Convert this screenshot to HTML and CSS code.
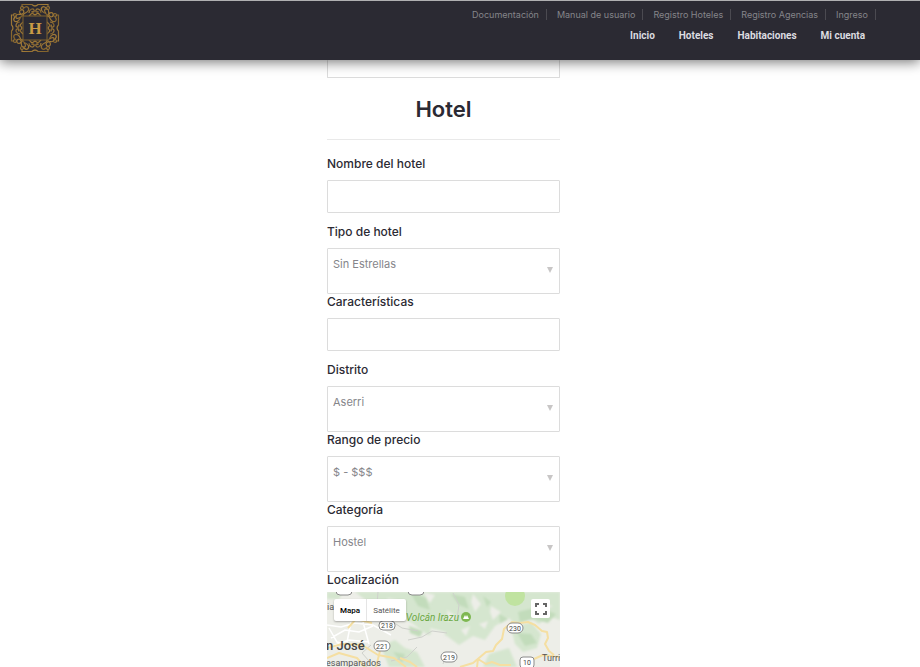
FILE: index.html
```html
<!DOCTYPE html>
<html lang="es">
<head>
<meta charset="utf-8">
<title>Registro Hoteles</title>
<link rel="stylesheet" href="styles.css">
</head>
<body>
<header class="header">
  <a class="logo" href="#" aria-label="Inicio">
    <svg viewBox="0 0 50 50" width="50" height="50">
      <defs>
        <linearGradient id="gold" x1="0" x2="1" y1="0" y2="1">
          <stop offset="0" stop-color="#80612c"/><stop offset=".5" stop-color="#a37c38"/><stop offset="1" stop-color="#735729"/>
        </linearGradient>
        <g id="side" fill="none" stroke="url(#gold)" stroke-width="1.200">
          <path d="M12 4V1.500h10q3 3 6 0h10V4"/>
          <circle cx="12" cy="5" r="1.500"/><circle cx="38" cy="5" r="1.500"/>
          <path d="M14 5c3-3 6 0 4 3s-6 2-5 5M36 5c-3-3-6 0-4 3s6 2 5 5"/>
          <path d="M19 10c0-4 4-5 5-3s-2 3-2 1M31 10c0-4-4-5-5-3s2 3 2 1"/>
          <path d="M14 13c-4-1-6-5-3-6s4 3 1 4-5-1-6 2 3 3 4 1"/>
          <path d="M19 13l3-3 3 2 3-2 3 3"/>
        </g>
      </defs>
      <use href="#side"/>
      <use href="#side" transform="rotate(90 25 25)"/>
      <use href="#side" transform="rotate(180 25 25)"/>
      <use href="#side" transform="rotate(270 25 25)"/>
      <rect x="13" y="13" width="24" height="24" fill="#2b2a33" stroke="#80632f"/>
      <text class="logo-letter" x="25" y="31" text-anchor="middle">H</text>
    </svg>
  </a>
  <div class="menus">
    <nav class="top-nav" aria-label="Accesos">
      <a href="#">Documentación</a>
      <a href="#">Manual de usuario</a>
      <a href="#">Registro Hoteles</a>
      <a href="#">Registro Agencias</a>
      <a href="#">Ingreso</a>
    </nav>
    <nav class="main-nav" aria-label="Principal">
      <a href="#">Inicio</a>
      <a href="#">Hoteles</a>
      <a href="#">Habitaciones</a>
      <a href="#">Mi cuenta</a>
    </nav>
  </div>
</header>
<main class="page">
  <form class="form">
    <input class="control control-previous" type="text" aria-label="Contacto">
    <h2 class="title">Hotel</h2>
    <div class="field field-text">
      <label for="nombre">Nombre del hotel</label>
      <input class="control" id="nombre" type="text">
    </div>
    <div class="field">
      <label for="tipo">Tipo de hotel</label>
      <div class="picker"><select class="control" id="tipo"><option>Sin Estrellas</option></select></div>
    </div>
    <div class="field field-text">
      <label for="caracteristicas">Características</label>
      <input class="control" id="caracteristicas" type="text">
    </div>
    <div class="field">
      <label for="distrito">Distrito</label>
      <div class="picker"><select class="control" id="distrito"><option>Aserri</option></select></div>
    </div>
    <div class="field">
      <label for="precio">Rango de precio</label>
      <div class="picker"><select class="control" id="precio"><option>$ - $$$</option></select></div>
    </div>
    <div class="field">
      <label for="categoria">Categoría</label>
      <div class="picker"><select class="control" id="categoria"><option>Hostel</option></select></div>
    </div>
    <div class="field-map">
      <span class="map-label">Localización</span>
      <div class="map">
        <svg class="map-tiles" viewBox="0 0 233 75" preserveAspectRatio="xMinYMin slice" role="img" aria-label="Mapa de San José">
          <defs><filter id="soft"><feGaussianBlur stdDeviation="1"/></filter></defs>
          <rect width="233" height="75" fill="#edeee8"/>
          <g fill="#d5e6cf" filter="url(#soft)">
            <path d="M28 0h205v28l-12-4-9 8-10-7-12 10-8-9-14 8-10 14-12-4-14 9-12-9-9-4-10 3-16-12-17-8-20-8z"/>
            <path d="M184 36l20-6 10 12-4 14-14 4-8-8zM54 54l14-6 10 8 12 4 8 15H62l-4-10zM162 62l20-6 8 19h-34zM0 0h16l-4 7H0z"/>
          </g>
          <g fill="#c2dcbb" filter="url(#soft)">
            <path d="M83 0l16 6 4 12-12-4zM124 2l14 3 4 12-10-4zM191 20l20-5 18 7-8 9-14-4-14 3zM190 41l14 1 6 9-12 3zM82 34l14 5-3 6-10-4zM66 60l12 2-3 9zM156 4l8 6-4 5zM172 22l9 5-8 4z"/>
          </g>
          <g fill="#edeee8" filter="url(#soft)">
            <path d="M96 0l12 3-5 8zM146 2l8 10-6 8-4-10zM164 14l10 6-8 8-3-8zM120 18l10 7-9 5zM152 32l9-3-3 8zM214 12l12 2-9 4zM103 36l16 4-5 9-9-4zM134 38l9-4-4 10zM60 6l10 2-6 5z"/>
          </g>
          <circle cx="188" cy="4" r="10" fill="#c0e3a0"/>
          <g fill="none" stroke="#fff" stroke-width="1.500">
            <path d="M0 33l14 2 14-4 18 2 18 10M4 46l14-8 14 2 14-6M2 36l8 14 22 6M24 30l-4 20M36 30l6 22M0 56l22-8 20 2"/>
          </g>
          <g fill="none" stroke="#cfd1cc">
            <path d="M51 0l-1 12M63 28l12 8 16 3M126 1l6 12-2 14M81 48l14-3 10-6 15 2M44 53l-9 8 7 8-3 6M64 69l16-4 10-10M116 72l4-12"/>
          </g>
          <g fill="none" stroke="#f5dfa2" stroke-width="2" stroke-linejoin="round">
            <path d="M0 56l15-4 20 1 16 10 16 3 12 9M0 66l12-5 18 5 8 9M73 66l10 4 7 5M133 75l13-4 6-5 7-6 7-1 3-6 6-6 2-10 8-7 8 1 8-1 7 3 7 6 5 1 1 6-3 6 4 7 5 4M150 75l1-8 8 5 6-2 8 3 11 0M207 67l9-4 17 2M21 36l8-9 16 4M53 59l-4 16"/>
          </g>
          <g class="shields">
            <rect x="9" y="-6" width="16" height="9" rx="4"/><rect x="81" y="-6" width="16" height="9" rx="4"/>
            <rect x="52" y="29" width="16" height="9" rx="4"/><rect x="47" y="49" width="16" height="10" rx="5"/>
            <rect x="114" y="60" width="16" height="10" rx="5"/><rect x="180" y="31" width="16" height="10" rx="5"/>
            <rect x="193" y="65" width="14" height="11" rx="3"/>
          </g>
          <g class="shield-text" text-anchor="middle">
            <text x="60" y="36">218</text><text x="55" y="57">221</text><text x="122" y="68">219</text><text x="188" y="39">230</text><text x="200" y="73">10</text>
          </g>
          <text class="map-park" x="132" y="29" text-anchor="end">Volcán Irazu</text>
          <circle cx="139" cy="25" r="5" fill="#7fb852"/><path d="M136 27l2-4 1 2 1-2 2 4z" fill="#fff"/>
          <text class="map-city" x="-1" y="58">n José</text>
          <text class="map-town" x="-1" y="74">esamparados</text>
          <text class="map-town" x="215" y="69">Turri</text>
          <text class="map-town" x="0" y="18">ia</text>
        </svg>
        <div class="map-types">
          <button type="button" class="active">Mapa</button>
          <button type="button">Satélite</button>
        </div>
        <button type="button" class="map-full" aria-label="Pantalla completa">
          <svg viewBox="0 0 12 12" width="12" height="12"><path d="M1 4V1h3M8 1h3v3M11 8v3H8M4 11H1V8" fill="none" stroke="#666" stroke-width="2"/></svg>
        </button>
      </div>
    </div>
  </form>
</main>
</body>
</html>
```
FILE: styles.css
```css
* { box-sizing: border-box; }
body {
  margin: 0;
  overflow-x: hidden;
  background: #fff;
  color: #2b2a33;
  font-family: Inter, "Liberation Sans", sans-serif;
}
a { color: inherit; text-decoration: none; }
.header {
  position: relative;
  z-index: 2;
  display: flex;
  justify-content: space-between;
  height: 60px;
  padding: 2px 44px 0 10px;
  background: #2b2a33;
  border-top: 1px solid #b0b0b2;
  box-shadow: 0 2px 12px rgba(0, 0, 0, .55);
}
.logo svg { display: block; }
.logo-letter { font: bold 17px "Liberation Serif", serif; fill: #c99b45; }
.menus { display: flex; flex-direction: column; align-items: flex-end; }
.top-nav {
  display: flex;
  gap: 10px;
  padding-top: 6px;
  color: #85858a;
  font-size: 9px;
  line-height: 11px;
}
.top-nav a { padding-right: 7px; border-right: 1px solid #4b4a51; }
.main-nav {
  display: flex;
  gap: 24px;
  padding: 8px 11px 0 0;
  color: #dcdce0;
  font-family: Roboto, sans-serif;
  font-size: 10px;
  font-weight: 700;
  line-height: 16px;
}
.page { display: flex; justify-content: center; padding-right: 33px; }
.form { width: 233px; }
.control {
  display: block;
  width: 100%;
  height: 33px;
  margin: 0;
  padding: 0 6px;
  background: #fff;
  border: 1px solid #dcdcdc;
  border-radius: 1px;
  color: #85858a;
  font: 11px Inter, sans-serif;
}
.control-previous { height: 18px; border-top: 0; }
.title {
  margin: 0 0 16px;
  padding: 16px 0 14px;
  border-bottom: 1px solid #e9e9e9;
  font-size: 22px;
  font-weight: 600;
  line-height: 31px;
  text-align: center;
}
.field { display: flex; flex-direction: column; gap: 8px; }
.field-text { margin-bottom: 11px; }
label, .map-label {
  display: block;
  font-size: 12px;
  font-weight: 500;
  line-height: 16px;
}
.picker { position: relative; }
.picker .control { height: 46px; padding: 0 20px 14px 5px; appearance: none; }
.picker::after {
  content: "";
  position: absolute;
  right: 7px;
  top: 19px;
  border: 3px solid transparent;
  border-top: 6px solid #c8c6c6;
  border-bottom: 0;
  pointer-events: none;
}
.map-label { margin-bottom: 4px; }
.map { position: relative; height: 75px; overflow: hidden; }
.map-tiles { display: block; width: 100%; height: 100%; font-family: Roboto, sans-serif; }
.shields { fill: #fff; stroke: #8a8a8a; }
.shield-text { font-size: 7px; fill: #444; }
.map-park { font-size: 10px; font-style: italic; fill: #6ba843; }
.map-city { font-size: 13px; font-weight: 500; fill: #444; }
.map-town { font-size: 9px; fill: #555; }
.map-types {
  position: absolute;
  left: 7px;
  top: 7px;
  display: flex;
  height: 22px;
  background: #fff;
  border-radius: 2px;
  box-shadow: 0 1px 2px rgba(0, 0, 0, .3);
}
.map-types button {
  padding: 0 6px;
  background: none;
  border: 0;
  color: #565656;
  font: 8px Roboto, sans-serif;
}
.map-types .active { border-right: 1px solid #e5e5e5; color: #000; font-weight: 500; }
.map-full {
  position: absolute;
  right: 10px;
  top: 7px;
  display: grid;
  place-items: center;
  width: 19px;
  height: 19px;
  padding: 0;
  background: #fff;
  border: 0;
  border-radius: 2px;
}
```
